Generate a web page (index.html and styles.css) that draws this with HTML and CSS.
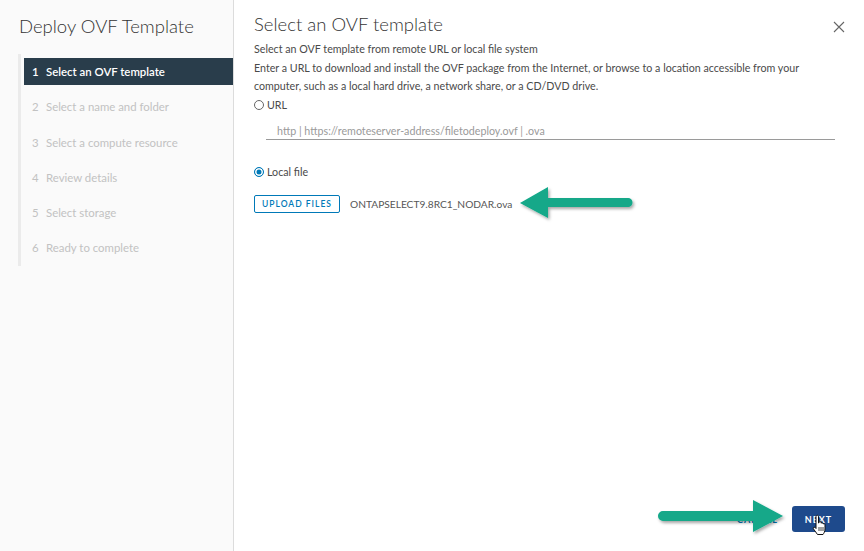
FILE: index.html
```html
<!DOCTYPE html>
<html lang="en">
<head>
    <meta charset="UTF-8">
    <title>Deploy OVF Template</title>
    <link rel="stylesheet" href="styles.css">
</head>
<body>
    <div class="wizard">
        <!-- Steps -->
        <aside class="sidebar">
            <h1 class="wizard-title">Deploy OVF Template</h1>
            <ul class="steps">
                <li class="step active"><span class="num">1</span>Select an OVF template</li>
                <li class="step"><span class="num">2</span>Select a name and folder</li>
                <li class="step"><span class="num">3</span>Select a compute resource</li>
                <li class="step"><span class="num">4</span>Review details</li>
                <li class="step"><span class="num">5</span>Select storage</li>
                <li class="step"><span class="num">6</span>Ready to complete</li>
            </ul>
        </aside>

        <!-- Page content -->
        <main class="content">
            <div class="content-head">
                <h2>Select an OVF template</h2>
                <svg class="close" width="12" height="12" viewBox="0 0 12 12">
                    <path d="M1 1 L11 11 M11 1 L1 11" stroke="#666" stroke-width="1.1" fill="none"/>
                </svg>
            </div>
            <p class="desc">Select an OVF template from remote URL or local file system</p>
            <p class="desc">Enter a URL to download and install the OVF package from the Internet, or browse to a location accessible from your computer, such as a local hard drive, a network share, or a CD/DVD drive.</p>

            <label class="radio"><span class="dot"></span>URL</label>
            <div class="url-field">
                <span class="placeholder">http | https://remoteserver-address/filetodeploy.ovf | .ova</span>
            </div>

            <label class="radio local"><span class="dot checked"></span>Local file</label>
            <div class="upload-row">
                <button class="btn-outline">UPLOAD FILES</button>
                <span class="filename">ONTAPSELECT9.8RC1_NODAR.ova</span>
            </div>

            <div class="footer">
                <button class="btn-link">CANCEL</button>
                <button class="btn-primary">NEXT</button>
            </div>
        </main>
    </div>

    <!-- annotation arrows -->
    <svg class="annot annot-file" width="140" height="50" viewBox="0 0 140 50">
        <defs>
            <filter id="sh1" x="-20%" y="-40%" width="140%" height="180%">
                <feDropShadow dx="1.5" dy="2" stdDeviation="1.6" flood-color="#000" flood-opacity="0.35"/>
            </filter>
        </defs>
        <g filter="url(#sh1)" fill="#12a889">
            <path d="M5 23 L33 7 L33 18 L113 18 A4.5 4.5 0 0 1 113 27 L33 27 L33 38 Z"/>
        </g>
    </svg>

    <svg class="annot annot-next" width="140" height="50" viewBox="0 0 140 50">
        <defs>
            <filter id="sh2" x="-20%" y="-40%" width="140%" height="180%">
                <feDropShadow dx="1.5" dy="2" stdDeviation="1.6" flood-color="#000" flood-opacity="0.35"/>
            </filter>
        </defs>
        <g filter="url(#sh2)" fill="#12a889">
            <path d="M131 19 L101 3 L101 14 L11 14 A4.5 4.5 0 0 0 11 24 L101 24 L101 35 Z"/>
        </g>
    </svg>

    <svg class="annot cursor" width="16" height="22" viewBox="0 0 16 22">
        <path d="M4.5 1.5 C5.5 1 6.5 1.5 6.5 2.5 L6.5 9 L7 9 L7 7.8 C7.5 7 8.8 7 9 8 L9 9.2 C9.5 8.5 10.8 8.5 11 9.5 L11 10 C11.5 9.5 12.8 9.6 13 10.6 L13 15 C13 17.5 12 19 11 20.5 L5.5 20.5 C4.5 19 3 17 1.5 15 C0.8 14 1.5 12.8 2.8 13.3 L4 14.5 L4 2.5 C4 2 4.2 1.7 4.5 1.5 Z" fill="#fff" stroke="#111" stroke-width="1"/>
        <path d="M7 13 L7 17 M9 13 L9 17 M11 13 L11 17" stroke="#111" stroke-width="0.8"/>
    </svg>
</body>
</html>
```

FILE: styles.css
```css
/* Global */
body {
    margin: 0;
    font-family: "Lato", "Open Sans", Arial, sans-serif;
    color: #565656;
    background-color: #fff;
}

.wizard {
    display: flex;
    width: 864px;
    height: 551px;
}

/* Sidebar */
.sidebar {
    width: 233px;
    background-color: #fafafa;
    border-right: 1px solid #dcdcdc;
    box-sizing: content-box;
}

.wizard-title {
    margin: 0;
    padding: 14px 0 0 19px;
    font-size: 18.5px;
    font-weight: 300;
    color: #333;
    line-height: 24px;
    height: 40px;
}

.steps {
    list-style: none;
    margin: 0 0 0 18px;
    padding: 4px 0 5px 3px;
    border-left: 3px solid #ebebeb;
}

.step {
    height: 27px;
    line-height: 27px;
    margin-bottom: 8.3px;
    padding-left: 8px;
    font-size: 11.4px;
    color: #c2c2c2;
}

.step:last-child {
    margin-bottom: 0;
}

.step .num {
    display: inline-block;
    width: 14px;
}

.step.active {
    background-color: #293d4b;
    color: #fff;
    font-weight: 600;
}

/* Content */
.content {
    flex: 1;
    display: flex;
    flex-direction: column;
    padding: 0 19px 19px 20px;
}

.content-head {
    display: flex;
    justify-content: space-between;
    align-items: center;
    height: 32px;
    padding-top: 8px;
}

.content-head h2 {
    margin: 0;
    font-size: 18.5px;
    font-weight: 300;
    color: #333;
}

.close {
    margin-top: 6px;
}

.desc {
    margin: 0;
    font-size: 10.7px;
    line-height: 18.5px;
    color: #4a4a4a;
}

.radio {
    display: flex;
    align-items: center;
    height: 18px;
    font-size: 10.7px;
    color: #4a4a4a;
}

.dot {
    width: 8px;
    height: 8px;
    border: 1px solid #666;
    border-radius: 50%;
    margin-right: 3px;
    box-sizing: content-box;
}

.dot.checked {
    border-color: #0079b8;
    background-color: #0079b8;
    box-shadow: inset 0 0 0 1.5px #fff;
}

.url-field {
    margin: 2px 10px 0 12px;
    height: 24px;
    border-bottom: 1px solid #9a9a9a;
    box-sizing: border-box;
    padding: 6px 0 0 11px;
    font-size: 10.7px;
    line-height: 18px;
}

.placeholder {
    color: #9a9a9a;
}

.radio.local {
    margin-top: 23px;
}

.upload-row {
    display: flex;
    align-items: center;
    margin-top: 14px;
}

.btn-outline {
    height: 18px;
    width: 86px;
    padding: 0;
    border: 1px solid #0079b8;
    border-radius: 2px;
    background-color: #fff;
    color: #0079b8;
    font-family: inherit;
    font-size: 8.5px;
    font-weight: 600;
    letter-spacing: 1px;
}

.filename {
    margin-left: 10px;
    font-size: 10.2px;
    color: #565656;
}

/* Footer */
.footer {
    margin-top: auto;
    display: flex;
    justify-content: flex-end;
    align-items: center;
    gap: 14px;
}

.btn-link {
    border: none;
    background: none;
    padding: 0;
    color: #0079b8;
    font-family: inherit;
    font-size: 9px;
    font-weight: 700;
    letter-spacing: 1px;
}

.btn-primary {
    width: 53px;
    height: 26px;
    border: none;
    border-radius: 3px;
    background-color: #1e4a8c;
    color: #fff;
    font-family: inherit;
    font-size: 9px;
    font-weight: 700;
    letter-spacing: 1px;
}

/* Annotations over the screenshot */
.annot {
    position: absolute;
}

.annot-file {
    left: 515px;
    top: 180px;
}

.annot-next {
    left: 652px;
    top: 497px;
}

.cursor {
    left: 812px;
    top: 514px;
}
```
